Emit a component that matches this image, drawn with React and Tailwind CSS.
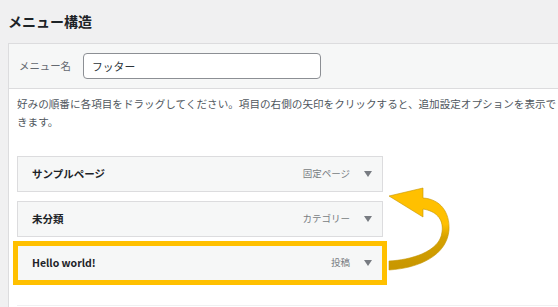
const items = [
  { id: 1, title: 'サンプルページ', type: '固定ページ', mt: 'mt-0' },
  { id: 2, title: '未分類', type: 'カテゴリー', mt: 'mt-[9px]' },
  { id: 3, title: 'Hello world!', type: '投稿', mt: 'mt-[8px]', highlight: true },
];

function Caret() {
  return (
    <svg width="8" height="6" viewBox="0 0 8 6" className="shrink-0">
      <polygon points="0,0 8,0 4,6" fill="#787c82" />
    </svg>
  );
}

function MenuItem({ item }) {
  return (
    <div
      className={`flex h-[36px] w-[366px] items-center border border-[#dcdcde] bg-[#f6f7f7] pl-[14px] pr-[10px] ${item.mt} ${
        item.highlight ? 'outline-[5px] outline-solid outline-[#ffc000] -outline-offset-1' : ''
      }`}
    >
      <span className="flex-1 text-[10.5px] font-bold leading-none text-[#1d2327]">{item.title}</span>
      <span className="mr-[14px] text-[9.5px] leading-none text-[#787c82]">{item.type}</span>
      <Caret />
    </div>
  );
}

function MoveArrow() {
  return (
    <svg
      width="558"
      height="307"
      viewBox="0 0 558 307"
      className="pointer-events-none absolute left-0 top-0"
    >
      <defs>
        <linearGradient id="arrowFill" gradientUnits="userSpaceOnUse" x1="0" y1="195" x2="0" y2="265">
          <stop offset="0" stopColor="#ffc000" />
          <stop offset="0.42" stopColor="#ffc000" />
          <stop offset="0.6" stopColor="#d6a200" />
          <stop offset="1" stopColor="#c99700" />
        </linearGradient>
      </defs>
      <path
        d="M389,261 C410,260 440,252 442,232 C444,218 435,211 423,209 L423,217 L389,196 L423,188 L423,198 C440,199 450,212 449,230 C447,255 420,268 389,270 Z"
        fill="url(#arrowFill)"
        stroke="#c59300"
        strokeWidth="0.6"
        strokeLinejoin="round"
      />
    </svg>
  );
}

export default function App() {
  return (
    <div className="relative h-[307px] w-[558px] overflow-hidden bg-[#f0f0f1] font-['Noto_Sans_CJK_JP',sans-serif]">
      <h2 className="h-[43px] pl-2 pt-[12px] text-[14px] font-bold leading-[18px] text-[#1d2327]">
        メニュー構造
      </h2>

      <div className="ml-2 h-[300px] border-l border-t border-[#dcdcde] bg-white">
        <div className="flex h-[45px] items-center border-b border-[#dcdcde] bg-[#f6f7f7] pl-[10px]">
          <span className="w-[64px] text-[10.4px] text-[#646970]">メニュー名</span>
          <div className="flex h-[26px] w-[238px] items-center rounded-[4px] border border-[#8c8f94] bg-white px-[8px] text-[10.8px] text-[#2c3338]">
            フッター
          </div>
        </div>

        <div className="pl-[8px]">
          <p className="pt-[6px] text-[10.6px] leading-[18px] text-[#50575e]">
            好みの順番に各項目をドラッグしてください。項目の右側の矢印をクリックすると、追加設定オプションを表示で
            <br />
            きます。
          </p>

          <div className="mt-[25px] flex flex-col">
            {items.map((item) => (
              <MenuItem key={item.id} item={item} />
            ))}
          </div>

          <div className="mt-[24px] border-t border-[#f0f0f1]" />
        </div>
      </div>

      <MoveArrow />
    </div>
  );
}
